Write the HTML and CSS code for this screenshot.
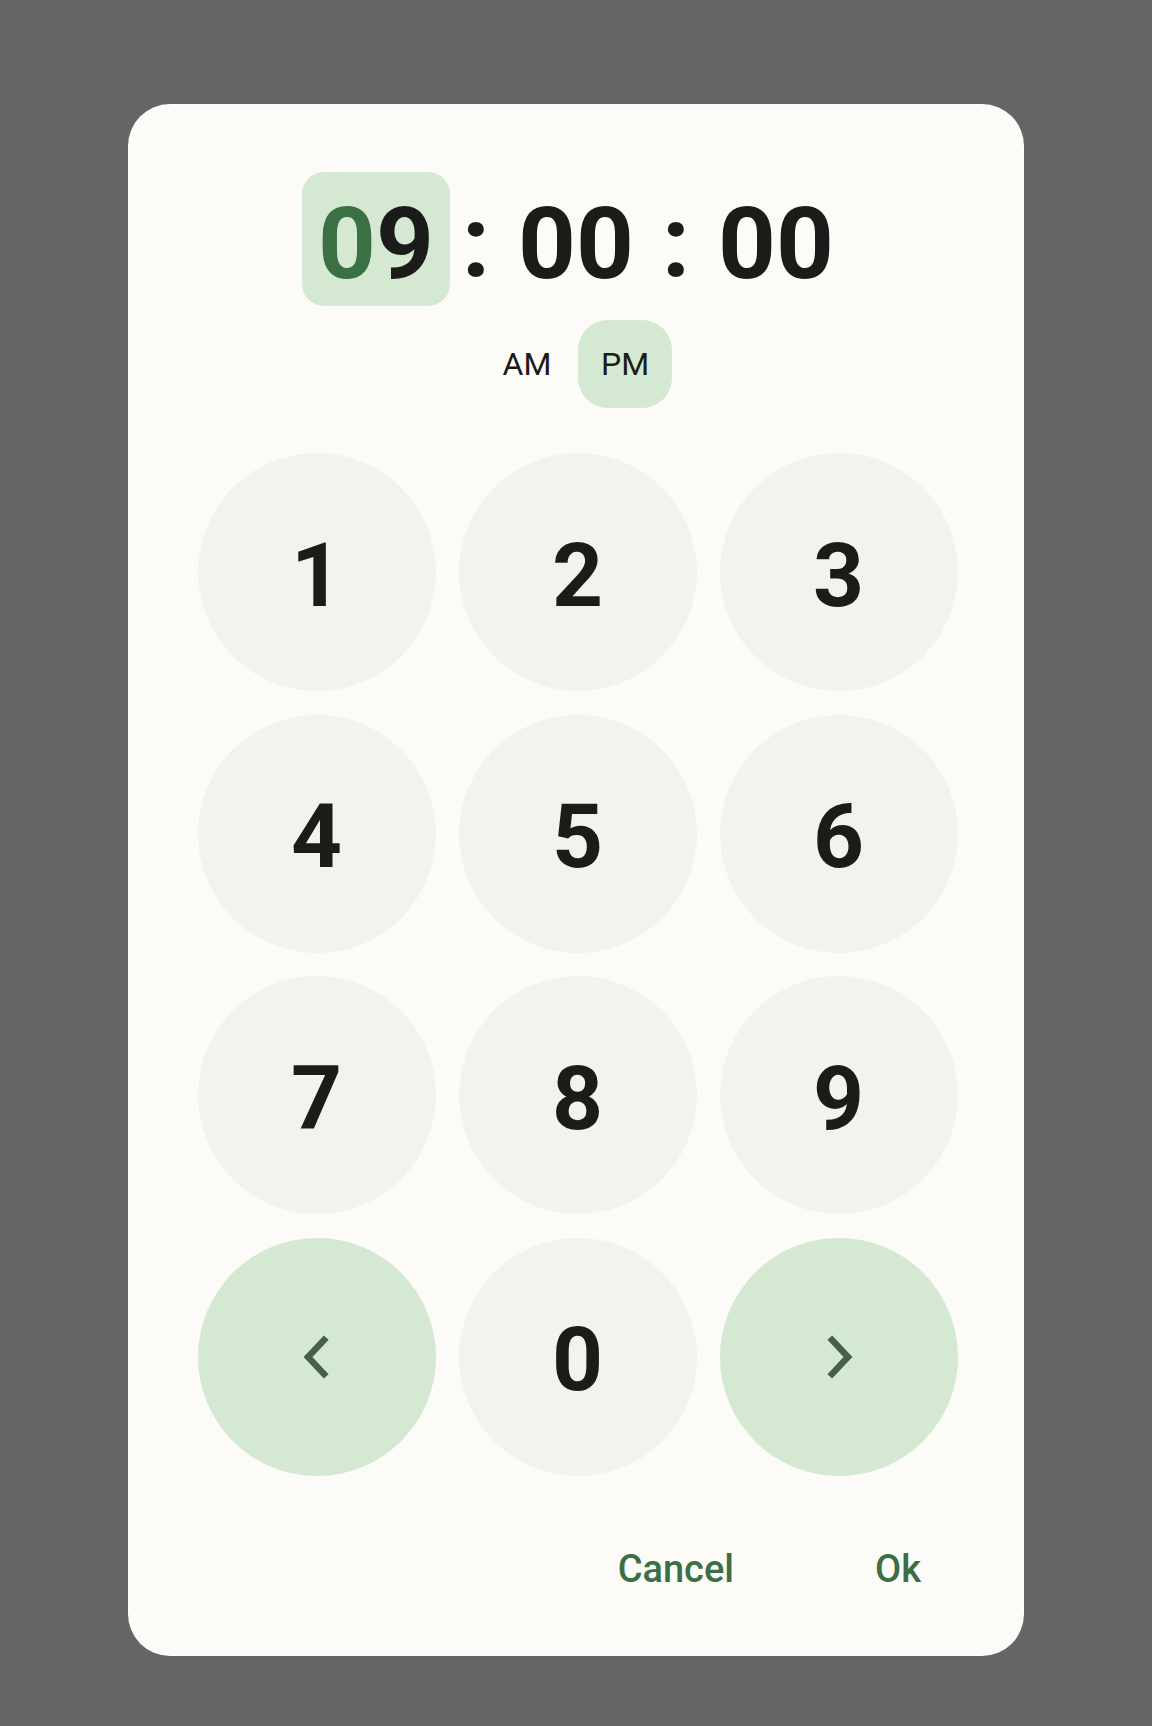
FILE: index.html
```html
<!DOCTYPE html>
<html lang="en">
<head>
<meta charset="utf-8">
<title>Time picker</title>
<link rel="stylesheet" href="styles.css">
</head>
<body>
<div class="scrim">
  <div class="dialog">
    <div class="time-row">
      <div class="segment active"><span class="typed">0</span><span>9</span></div>
      <div class="colon">:</div>
      <div class="segment">00</div>
      <div class="colon">:</div>
      <div class="segment">00</div>
    </div>
    <div class="period-row">
      <div class="period">AM</div>
      <div class="period selected">PM</div>
    </div>
    <div class="keypad">
      <button class="key">1</button>
      <button class="key">2</button>
      <button class="key">3</button>
      <button class="key">4</button>
      <button class="key">5</button>
      <button class="key">6</button>
      <button class="key">7</button>
      <button class="key">8</button>
      <button class="key">9</button>
      <button class="key nav" aria-label="Previous">
        <svg width="40" height="48" viewBox="0 0 40 48"><path d="M27 7 L11 24 L27 41" fill="none" stroke="#45604b" stroke-width="6.5" stroke-linecap="square" stroke-linejoin="miter"/></svg>
      </button>
      <button class="key">0</button>
      <button class="key nav" aria-label="Next">
        <svg width="40" height="48" viewBox="0 0 40 48"><path d="M13 7 L29 24 L13 41" fill="none" stroke="#45604b" stroke-width="6.5" stroke-linecap="square" stroke-linejoin="miter"/></svg>
      </button>
    </div>
    <div class="actions">
      <button class="action">Cancel</button>
      <button class="action">Ok</button>
    </div>
  </div>
</div>
</body>
</html>
```
FILE: styles.css
```css
html, body {
  margin: 0;
  padding: 0;
}
body {
  background: #676465;
  font-family: Roboto, "Noto Sans", "Liberation Sans", sans-serif;
  color: #1b1c19;
}
.scrim {
  width: 1152px;
  height: 1726px;
  padding-top: 104px;
  box-sizing: border-box;
}
.dialog {
  width: 896px;
  height: 1552px;
  margin: 0 auto;
  background: #fcfbf7;
  border-radius: 42px;
  box-sizing: border-box;
  padding-top: 68px;
  display: flex;
  flex-direction: column;
  align-items: center;
}
.time-row {
  display: flex;
  align-items: center;
  height: 134px;
}
.segment {
  width: 148px;
  height: 134px;
  box-sizing: border-box;
  padding-top: 8px;
  border-radius: 22px;
  display: flex;
  align-items: center;
  justify-content: center;
  font-size: 101px;
  font-weight: 700;
  line-height: 1;
  color: #1b1c19;
}
.segment.active {
  background: #d5e9d2;
}
.typed {
  color: #3b6f44;
}
.colon {
  width: 52px;
  text-align: center;
  font-size: 101px;
  font-weight: 700;
  line-height: 1;
  padding-top: 4px;
}
.period-row {
  display: flex;
  gap: 4px;
  margin-top: 14px;
}
.period {
  width: 94px;
  height: 88px;
  border-radius: 30px;
  display: flex;
  align-items: center;
  justify-content: center;
  font-size: 32px;
  font-weight: 400;
  line-height: 1;
  color: #1b1c19;
}
.period.selected {
  background: #d5e9d2;
}
.keypad {
  margin-top: 45px;
  display: grid;
  grid-template-columns: repeat(3, 238px);
  grid-auto-rows: 238px;
  column-gap: 23px;
  row-gap: 23.5px;
  margin-left: 3px;
}
.key {
  border: none;
  margin: 0;
  padding: 6px 0 0 0;
  border-radius: 50%;
  background: #f2f3ed;
  font-family: Roboto, "Noto Sans", "Liberation Sans", sans-serif;
  font-size: 89px;
  font-weight: 700;
  line-height: 1;
  color: #1b1c19;
  display: flex;
  align-items: center;
  justify-content: center;
}
.key.nav {
  background: #d5e9d2;
  padding: 0;
}
.actions {
  align-self: stretch;
  display: flex;
  justify-content: flex-end;
  gap: 77px;
  padding-right: 71px;
  margin-top: 74px;
}
.action {
  border: none;
  background: transparent;
  padding: 0 32px;
  margin: 0;
  font-family: Roboto, "Noto Sans", "Liberation Sans", sans-serif;
  font-size: 38px;
  font-weight: 500;
  line-height: 1;
  color: #3b6f44;
}
```
